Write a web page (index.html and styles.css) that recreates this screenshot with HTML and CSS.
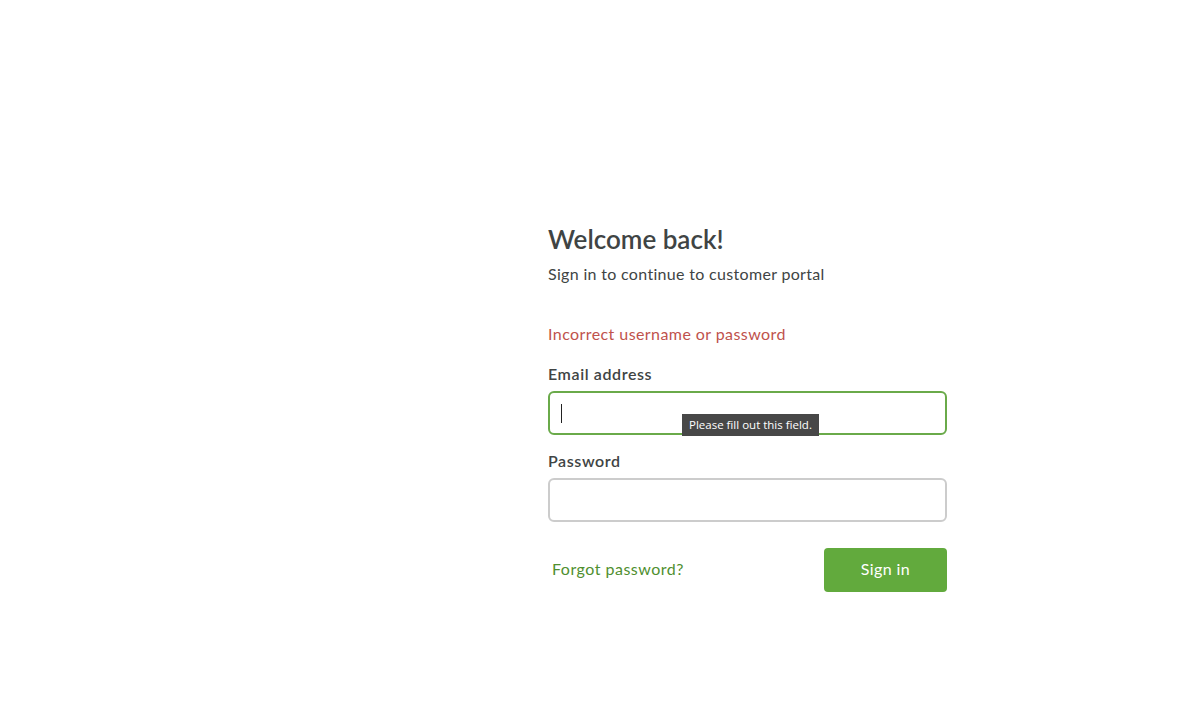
FILE: index.html
```html
<!DOCTYPE html>
<html lang="en">
<head>
  <meta charset="UTF-8">
  <title>Sign in</title>
  <link rel="stylesheet" href="styles.css">
</head>
<body>
  <div class="page">
    <div class="side"></div>

    <form class="login" novalidate>
      <h1 class="title">Welcome back!</h1>
      <p class="subtitle">Sign in to continue to customer portal</p>

      <p class="error">Incorrect username or password</p>

      <label class="label" for="email">Email address</label>
      <div class="field">
        <div class="input focused"><span class="caret"></span></div>
        <div class="bubble">Please fill out this field.</div>
      </div>

      <label class="label" for="password">Password</label>
      <div class="field">
        <div class="input"></div>
      </div>

      <div class="actions">
        <a class="forgot" href="#">Forgot password?</a>
        <button class="submit" type="button">Sign in</button>
      </div>
    </form>
  </div>
</body>
</html>
```

FILE: styles.css
```css
body {
  margin: 0;
  background: #fff;
  font-family: 'Lato', 'Open Sans', sans-serif;
  color: #404444;
}

.page {
  display: flex;
  min-height: 100vh;
}

.side {
  width: 548px;
  flex: none;
}

.login {
  width: 399px;
  padding-top: 224px;
  display: flex;
  flex-direction: column;
}

.title {
  margin: 0;
  font-size: 26px;
  font-weight: 600;
  line-height: 30px;
}

.subtitle {
  margin: 8px 0 0;
  font-size: 16px;
  line-height: 24px;
  letter-spacing: 0.32px;
}

.error {
  margin: 36px 0 0;
  font-size: 16px;
  line-height: 24px;
  letter-spacing: 0.42px;
  color: #c0524c;
}

.label {
  display: block;
  margin-top: 16px;
  font-size: 16px;
  font-weight: 600;
  line-height: 24px;
  letter-spacing: 0.6px;
}

.field + .label {
  margin-top: 14px;
}

.field {
  position: relative;
  margin-top: 5px;
}

.input {
  box-sizing: border-box;
  height: 44px;
  border: 2px solid #cccccc;
  border-radius: 6px;
  background: #fff;
}

.input.focused {
  border-color: #6aaa4a;
  display: flex;
  align-items: center;
  padding-left: 11px;
}

.caret {
  width: 1px;
  height: 19px;
  background: #222;
  margin-top: 1px;
}

/* native validation bubble */
.bubble {
  position: absolute;
  left: 134px;
  top: 23px;
  height: 22px;
  padding: 0 7px;
  background: #474747;
  color: #fff;
  font-family: 'Open Sans', sans-serif;
  font-size: 11.5px;
  line-height: 22px;
  white-space: nowrap;
}

.actions {
  display: flex;
  justify-content: space-between;
  align-items: center;
  margin-top: 26px;
}

.forgot {
  margin-left: 4px;
  margin-bottom: 4px;
  color: #4f8f2f;
  font-size: 16px;
  letter-spacing: 0.5px;
  text-decoration: none;
}

.submit {
  width: 123px;
  height: 44px;
  border: none;
  border-radius: 4px;
  background: #62aa3d;
  color: #fff;
  font-family: inherit;
  font-size: 16px;
  letter-spacing: 0.4px;
  padding: 0 0 4px;
  cursor: pointer;
}
```
